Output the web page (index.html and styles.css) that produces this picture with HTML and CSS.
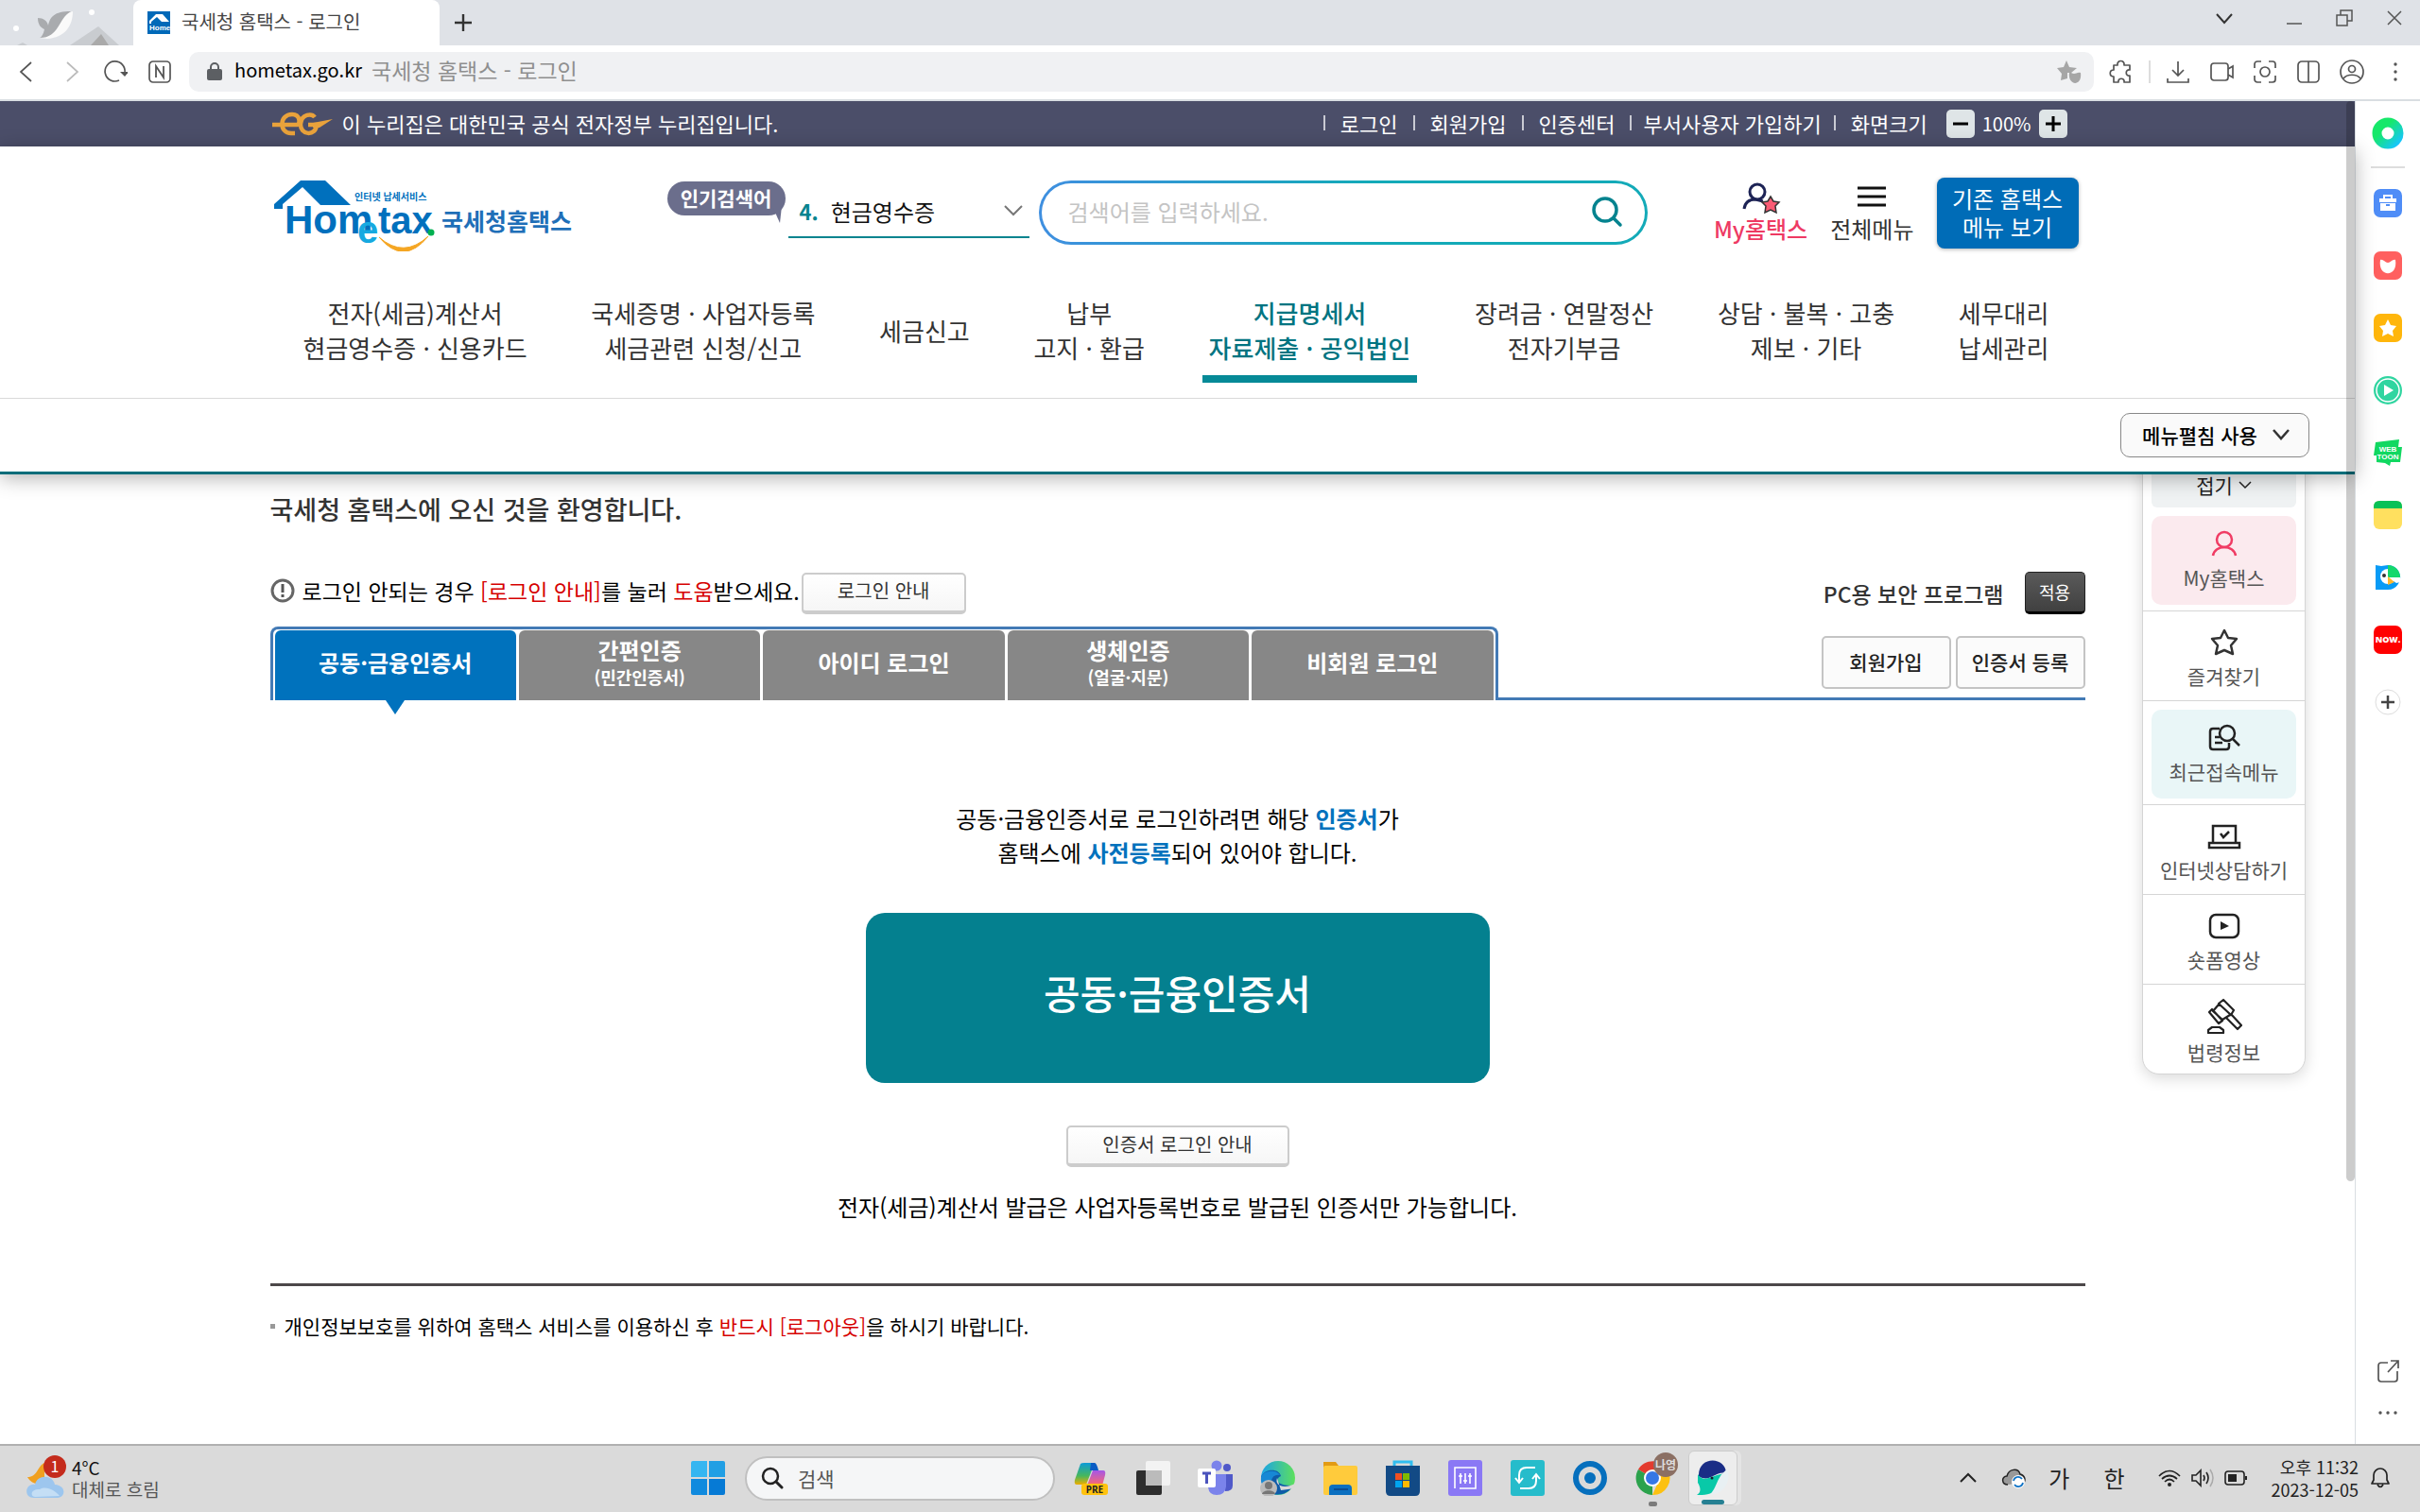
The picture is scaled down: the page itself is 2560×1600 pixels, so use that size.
FILE: index.html
```html
<!DOCTYPE html>
<html lang="ko">
<head>
<meta charset="utf-8">
<meta name="viewport" content="width=device-width, initial-scale=1">
<title>국세청 홈택스 - 로그인</title>
<link rel="stylesheet" href="styles.css">
</head>
<body>
<div class="tabstrip">
  <svg class="whale-deco" viewBox="0 0 141 48" aria-hidden="true">
    <circle cx="17" cy="30" r="3" fill="#fff"/><circle cx="97" cy="13" r="3" fill="#fff"/>
    <path d="M74 48L104 28L126 48Z" fill="#c9ccd0"/><path d="M96 48L107 36L115 48Z" fill="#aaa"/>
    <path d="M18 48l6-3 5 3z" fill="#c9ccd0"/>
    <path d="M77 12C77 28 68 40 50 41L42 40C56 34 54 18 77 12Z" fill="#fafafa"/>
    <path d="M75 12C57 12 53 18 51 27C50 22 46 19 40 19C40 26 43 29 47 31C46 36 44 39 42 40C63 40 61 20 75 12Z" fill="#a9abae"/>
  </svg>
  <div class="tab">
    <svg width="24" height="24" viewBox="0 0 24 24" aria-hidden="true"><rect width="24" height="24" fill="#0069b8"/><path d="M2 13V10L9 3H16L23 11H15L10 6L4 11V13Z" fill="#fff"/><text x="2" y="20" class="favicon-text">Home</text></svg>
    <span>국세청 홈택스 - 로그인</span>
  </div>
  <button class="icon-btn new-tab" aria-label="새 탭"><svg width="20" height="20" viewBox="0 0 20 20"><path d="M10 1V19M1 10H19" stroke="#333" stroke-width="2.4"/></svg></button>
  <div class="window-controls">
    <button class="icon-btn" aria-label="탭 검색"><svg width="18" height="18" viewBox="0 0 18 18"><path d="M1 5L9 14L17 5" fill="none" stroke="#333" stroke-width="2"/></svg></button>
    <button class="icon-btn" aria-label="최소화"><svg width="18" height="18" viewBox="0 0 18 18"><path d="M1 15H17" stroke="#555" stroke-width="1.5"/></svg></button>
    <button class="icon-btn" aria-label="창 크기"><svg width="18" height="18" viewBox="0 0 18 18"><path d="M1 6H12V17H1ZM5 6V1H17V12H12" fill="none" stroke="#555" stroke-width="1.5"/></svg></button>
    <button class="icon-btn" aria-label="닫기"><svg width="18" height="18" viewBox="0 0 18 18"><path d="M2 2L16 16M16 2L2 16" stroke="#555" stroke-width="1.5"/></svg></button>
  </div>
</div>

<div class="toolbar">
  <div class="nav-icons">
    <button class="icon-btn" aria-label="뒤로"><svg width="26" height="26" viewBox="0 0 26 26"><path d="M18 3L7 13L18 23" fill="none" stroke="#555" stroke-width="1.7"/></svg></button>
    <button class="icon-btn" aria-label="앞으로"><svg width="26" height="26" viewBox="0 0 26 26"><path d="M9 3L20 13L9 23" fill="none" stroke="#bbb" stroke-width="1.7"/></svg></button>
    <button class="icon-btn" aria-label="새로고침"><svg width="26" height="26" viewBox="0 0 26 26"><path d="M17 22A10.500 10.500 0 1 1 23 14" fill="none" stroke="#555" stroke-width="1.7"/><path d="M18 13H27L23 18Z" fill="#555"/></svg></button>
    <button class="icon-btn" aria-label="네이버"><svg width="26" height="26" viewBox="0 0 26 26"><rect x="2" y="2" width="22" height="22" rx="4" fill="none" stroke="#555" stroke-width="1.700"/><path d="M9 19V7L17 19V7" fill="none" stroke="#555" stroke-width="1.800"/></svg></button>
  </div>
  <div class="address">
    <svg width="16" height="20" viewBox="0 0 16 20" aria-hidden="true"><rect y="7" width="16" height="12" rx="2" fill="#5c5f63"/><path d="M4 8V5A4 4 0 0 1 12 5V8" fill="none" stroke="#5c5f63" stroke-width="2"/></svg>
    <span class="host">hometax.go.kr</span><span class="page-name">국세청 홈택스 - 로그인</span>
    <svg class="address-star" width="26" height="24" viewBox="0 0 26 24" aria-hidden="true"><path d="M10 0L13 7L21 8L15 13L11 13L11 19L4 21L5 14L0 8L7 7Z" fill="#a6a6a6"/><path d="M13 13C15 12 16 14 18 14C20 14 22 12 25 13C27 28 11 27 13 13Z" fill="#a6a6a6"/></svg>
  </div>
  <div class="tool-icons">
    <button class="icon-btn" aria-label="확장"><svg width="26" height="26" viewBox="0 0 26 26"><path d="M5 6H9C8 0 17 0 16 6H22V11C17 10 17 18 22 17V24H16C17 19 9 19 10 24H5V18C0 18 0 11 5 11Z" fill="none" stroke="#555" stroke-width="1.700" stroke-linejoin="round"/></svg></button>
    <span class="tool-divider"></span>
    <button class="icon-btn" aria-label="다운로드"><svg width="26" height="26" viewBox="0 0 26 26"><path d="M13 2V17M7 11L13 17L19 11M2 20V24H24V20" fill="none" stroke="#555" stroke-width="1.700"/></svg></button>
    <button class="icon-btn" aria-label="녹화"><svg width="26" height="26" viewBox="0 0 26 26"><rect x="2" y="4" width="18" height="18" rx="3" fill="none" stroke="#555" stroke-width="1.700"/><path d="M20 10L25 7V19L20 16" fill="none" stroke="#555" stroke-width="1.700"/></svg></button>
    <button class="icon-btn" aria-label="캡처"><svg width="26" height="26" viewBox="0 0 26 26"><path d="M2 9V5A3 3 0 0 1 5 2H9M17 2H21A3 3 0 0 1 24 5V9M24 17V21A3 3 0 0 1 21 24H17M9 24H5A3 3 0 0 1 2 21V17" fill="none" stroke="#555" stroke-width="1.700"/><circle cx="13" cy="13" r="5" fill="none" stroke="#555" stroke-width="1.700"/></svg></button>
    <button class="icon-btn" aria-label="분할"><svg width="26" height="26" viewBox="0 0 26 26"><rect x="2" y="2" width="22" height="22" rx="4" fill="none" stroke="#555" stroke-width="1.700"/><path d="M13 2V24" stroke="#555" stroke-width="1.700"/></svg></button>
    <button class="icon-btn" aria-label="프로필"><svg width="26" height="26" viewBox="0 0 26 26"><circle cx="13" cy="13" r="12" fill="none" stroke="#555" stroke-width="1.700"/><circle cx="13" cy="10" r="3.500" fill="none" stroke="#555" stroke-width="1.700"/><path d="M4 20C8 15 18 15 22 20" fill="none" stroke="#555" stroke-width="1.700"/></svg></button>
    <button class="icon-btn" aria-label="메뉴"><svg width="26" height="26" viewBox="0 0 26 26"><g fill="#555"><circle cx="13" cy="5" r="1.700"/><circle cx="13" cy="13" r="1.700"/><circle cx="13" cy="21" r="1.700"/></g></svg></button>
  </div>
</div>

<div class="viewport">
  <div class="page">
    <div class="gov-bar"><div class="container gov-inner">
      <svg width="68" height="26" viewBox="0 0 68 26" aria-hidden="true"><g fill="none" stroke="#e9a23b" stroke-width="4.500"><path d="M2 14H28C32 14 32 3 23 3C9 3 9 23 22 23H26"/><path d="M47 6C44 2 33 2 32 13C31 25 48 27 49 14H40"/></g><path d="M45 12L66 8L52 17H45Z" fill="#e9a23b"/></svg>
      <span>이 누리집은 대한민국 공식 전자정부 누리집입니다.</span>
      <ul class="util">
        <li><a href="#">로그인</a></li><li><a href="#">회원가입</a></li><li><a href="#">인증센터</a></li><li class="tight"><a href="#">부서사용자 가입하기</a></li><li class="tight-after">화면크기</li>
      </ul>
      <div class="zoomer">
        <button aria-label="축소"><svg width="16" height="16" viewBox="0 0 16 16"><path d="M0 8H16" stroke="#000" stroke-width="3"/></svg></button>
        <output>100%</output>
        <button aria-label="확대"><svg width="16" height="16" viewBox="0 0 16 16"><path d="M0 8H16M8 0V16" stroke="#000" stroke-width="3"/></svg></button>
      </div>
    </div></div>

    <header class="site-head">
      <div class="container head-row">
        <a href="#" class="logo" aria-label="국세청홈택스">
          <svg width="320" height="76" viewBox="0 0 320 76">
            <path d="M4 31V26L32 1H58L85 27H53L34 8L13 26V31Z" fill="#0070bd"/>
            <text x="15" y="57" class="logo-main">Hom</text>
            <text x="92" y="67" class="logo-e">e</text>
            <text x="114" y="57" class="logo-tax">tax</text>
            <circle cx="170" cy="56" r="3.500" fill="#00b050"/>
            <path d="M115 61Q141 84 167 60Q141 92 115 61Z" fill="#f5a623" stroke="#f5a623"/>
            <text x="89" y="22" class="logo-sub">인터넷 납세서비스</text>
            <text x="181" y="54" class="logo-name">국세청홈택스</text>
          </svg>
        </a>
        <div class="hot">
          <span class="hot-badge">인기검색어</span>
          <div class="hot-pick"><b>4.</b><select aria-label="인기검색어"><option>현금영수증</option></select>
            <svg width="20" height="12" viewBox="0 0 20 12" aria-hidden="true"><path d="M1 1L10 10L19 1" fill="none" stroke="#777" stroke-width="2"/></svg></div>
        </div>
        <form class="search"><input type="search" placeholder="검색어를 입력하세요." aria-label="검색어">
          <button type="button" aria-label="검색"><svg width="34" height="34" viewBox="0 0 34 34"><circle cx="15" cy="15" r="12" fill="none" stroke="#05838f" stroke-width="3.500"/><path d="M24 24L31 31" stroke="#05838f" stroke-width="3.500" stroke-linecap="round"/></svg></button></form>
        <a href="#" class="quick my"><svg width="42" height="34" viewBox="0 0 42 34" aria-hidden="true"><circle cx="17" cy="10" r="8" fill="none" stroke="#1d2355" stroke-width="3"/><path d="M3 28C4 21 9 18 15 18L23 20" fill="none" stroke="#1d2355" stroke-width="3"/><path d="M31 15L34 20L40 21L36 25L37 32L31 29L25 32L26 25L22 21L28 20Z" fill="#fa5b74" stroke="#333" stroke-width="1.500"/></svg>My홈택스</a>
        <a href="#" class="quick all"><svg width="30" height="34" viewBox="0 0 30 34" aria-hidden="true"><path d="M0 6H30M0 15H30M0 24H30" stroke="#111" stroke-width="3"/></svg>전체메뉴</a>
        <button class="classic">기존 홈택스<br>메뉴 보기</button>
      </div>
      <nav class="container gnb">
        <a href="#">전자(세금)계산서<br>현금영수증 · 신용카드</a>
        <a href="#">국세증명 · 사업자등록<br>세금관련 신청/신고</a>
        <a href="#">세금신고</a>
        <a href="#">납부<br>고지 · 환급</a>
        <a href="#" class="on">지급명세서<br>자료제출 · 공익법인</a>
        <a href="#">장려금 · 연말정산<br>전자기부금</a>
        <a href="#">상담 · 불복 · 고충<br>제보 · 기타</a>
        <a href="#">세무대리<br>납세관리</a>
      </nav>
      <div class="submenu"><button class="unfold">메뉴펼침 사용<svg width="18" height="12" viewBox="0 0 18 12" aria-hidden="true"><path d="M1 1L9 10L17 1" fill="none" stroke="#333" stroke-width="2.500"/></svg></button></div>
    </header>

    <main class="login">
      <div class="container">
        <h1>국세청 홈택스에 오신 것을 환영합니다.</h1>
        <div class="notice">
          <div class="notice-text">
            <svg width="26" height="26" viewBox="0 0 26 26" aria-hidden="true"><circle cx="13" cy="13" r="11" fill="none" stroke="#666" stroke-width="3"/><path d="M13 6V15M13 17V20" stroke="#555" stroke-width="3"/></svg>
            <p>로그인 안되는 경우 <em>[로그인 안내]</em>를 눌러 <em>도움</em>받으세요.</p>
          </div>
          <button class="soft">로그인 안내</button>
          <strong class="sec">PC용 보안 프로그램</strong>
          <button class="apply">적용</button>
        </div>
        <div class="tabs">
          <div class="tab-set">
            <button class="on">공동·금융인증서</button>
            <button>간편인증<small>(민간인증서)</small></button>
            <button>아이디 로그인</button>
            <button>생체인증<small>(얼굴·지문)</small></button>
            <button>비회원 로그인</button>
          </div>
          <div class="tab-side"><button class="plain">회원가입</button><button class="plain">인증서 등록</button></div>
        </div>
        <section class="cert">
          <p>공동·금융인증서로 로그인하려면 해당 <b>인증서</b>가<br>홈택스에 <b>사전등록</b>되어 있어야 합니다.</p>
          <button class="big">공동·금융인증서</button>
          <button class="soft wide">인증서 로그인 안내</button>
          <p>전자(세금)계산서 발급은 사업자등록번호로 발급된 인증서만 가능합니다.</p>
        </section>
        <ul class="foot-note"><li>개인정보보호를 위하여 홈택스 서비스를 이용하신 후 <em>반드시 [로그아웃]</em>을 하시기 바랍니다.</li></ul>
      </div>
      <aside class="float">
        <a href="#" class="fold"><span>접기 <svg width="14" height="9" viewBox="0 0 14 9" aria-hidden="true"><path d="M1 1L7 7L13 1" fill="none" stroke="#222" stroke-width="1.500"/></svg></span></a>
        <div class="cell"><a href="#" class="pink"><svg width="30" height="32" viewBox="0 0 30 32"><circle cx="15" cy="11" r="8" fill="none" stroke="#f03c64" stroke-width="2.500"/><path d="M3 28C5 16 25 16 27 28" fill="none" stroke="#f03c64" stroke-width="2.500"/></svg>My홈택스</a></div>
        <div class="cell"><a href="#"><svg width="32" height="32" viewBox="0 0 32 32"><path d="M16 3L20 11L29 12L23 19L25 28L16 24L7 28L9 19L3 12L12 11Z" fill="none" stroke="#333" stroke-width="2.500" stroke-linejoin="round"/></svg>즐겨찾기</a></div>
        <div class="cell"><a href="#" class="mint"><svg width="34" height="32" viewBox="0 0 34 32"><path d="M12 6H5Q2 6 2 9V25Q2 28 5 28H19Q22 28 22 25V21M7 15H12M7 21H15" fill="none" stroke="#222" stroke-width="2.500"/><circle cx="20" cy="11" r="8" fill="none" stroke="#222" stroke-width="2.500"/><path d="M26 17L33 24" stroke="#222" stroke-width="2.500"/></svg>최근접속메뉴</a></div>
        <div class="cell"><a href="#"><svg width="36" height="32" viewBox="0 0 36 32"><path d="M6 22V5H30V22M2 23H34V28H2ZM14 13L17 17L23 11" fill="none" stroke="#222" stroke-width="2.500"/></svg>인터넷상담하기</a></div>
        <div class="cell"><a href="#"><svg width="34" height="32" viewBox="0 0 34 32"><rect x="2" y="4" width="30" height="24" rx="6" fill="none" stroke="#222" stroke-width="2.500"/><path d="M13 11V20L22 16Z" fill="#222"/></svg>숏폼영상</a></div>
        <div class="cell"><a href="#"><svg width="38" height="38" viewBox="0 0 38 38"><path d="M13 6L18 2L29 13L26 18ZM3 15L6 12L17 24L13 27ZM13 7L7 14L17 23L25 18M26 17L37 29L33 33L21 21M2 37V34L6 31H14L18 34V37Z" fill="none" stroke="#222" stroke-width="2.200" stroke-linejoin="round"/></svg>법령정보</a></div>
      </aside>
    </main>
    <div class="scrollbar"></div>
  </div>

  <aside class="sidebar">
    <a href="#" aria-label="웨일"><svg width="34" height="34" viewBox="0 0 34 34"><defs><linearGradient id="rg" x1="0" y1="0" x2="1" y2="1"><stop offset=".3" stop-color="#17e86a"/><stop offset="1" stop-color="#16c5ff"/></linearGradient></defs><circle cx="17" cy="17" r="11.500" fill="none" stroke="url(#rg)" stroke-width="10"/></svg></a>
    <hr>
    <a href="#" aria-label="도구"><svg width="30" height="30" viewBox="0 0 30 30"><rect width="30" height="30" rx="7" fill="#4f8df7"/><path d="M11 10V7H19V10" fill="none" stroke="#fff" stroke-width="2"/><path d="M6 10H24V14H6ZM7 15H23V23H7Z" fill="#fff"/><rect x="13" y="16" width="4" height="2" fill="#4f8df7"/></svg></a>
    <a href="#" aria-label="스크랩"><svg width="30" height="30" viewBox="0 0 30 30"><rect width="30" height="30" rx="7" fill="#ff605f"/><path d="M7 9C10 8 12 12 15 12C18 12 20 8 23 9C26 28 4 28 7 9Z" fill="#fff"/></svg></a>
    <a href="#" aria-label="즐겨찾기"><svg width="30" height="30" viewBox="0 0 30 30"><rect width="30" height="30" rx="7" fill="#ffb60b"/><path d="M15 6L18 12L24 13L20 18L21 24L15 21L9 24L10 18L6 13L12 12Z" fill="#fff"/></svg></a>
    <a href="#" aria-label="재생"><svg width="30" height="30" viewBox="0 0 30 30"><circle cx="15" cy="15" r="15" fill="#30d5a0"/><circle cx="15" cy="15" r="12" fill="none" stroke="#fff" stroke-width="1.500"/><path d="M11 9V21L21 15Z" fill="#fff"/></svg></a>
    <a href="#" aria-label="웹툰"><svg width="30" height="30" viewBox="0 0 30 30"><path d="M2 4L27 1L26 9H30L28 25H18L17 29L12 26L3 25V18H0Z" fill="#11d861"/><text x="15" y="14" text-anchor="middle" class="toon">WEB</text><text x="15" y="22" text-anchor="middle" class="toon">TOON</text></svg></a>
    <a href="#" aria-label="메모"><svg width="30" height="30" viewBox="0 0 30 30"><rect width="30" height="30" rx="6" fill="#ffe05f"/><path d="M0 8V6Q0 0 6 0H24Q30 0 30 6V8Z" fill="#08c157"/></svg></a>
    <a href="#" aria-label="파파고"><svg width="30" height="30" viewBox="0 0 30 30"><path d="M2 2L8 3L15 2A13 13 0 0 1 26 22Q22 28 15 28H2Z" fill="#089bf6"/><circle cx="15" cy="14" r="8" fill="#fff"/><path d="M15 2A13 13 0 0 1 28 15H15Z" fill="#15d86b"/><path d="M15 15L28 15V20L24 21Z" fill="#fff"/><path d="M15 14L22 20L15 23Z" fill="#ffb72b"/><circle cx="11" cy="13" r="2" fill="#333"/></svg></a>
    <a href="#" aria-label="나우"><svg width="30" height="30" viewBox="0 0 30 30"><rect width="30" height="30" rx="7" fill="#f00"/><text x="15" y="18" text-anchor="middle" class="now">NOW.</text></svg></a>
    <a href="#" aria-label="추가"><svg width="30" height="30" viewBox="0 0 30 30"><circle cx="15" cy="15" r="13" fill="#fff" stroke="#ddd"/><path d="M15 8V22M8 15H22" stroke="#444" stroke-width="2.500"/></svg></a>
    <a href="#" class="push" aria-label="새 창"><svg width="26" height="26" viewBox="0 0 26 26"><path d="M13 4H6Q3 4 3 7V21Q3 24 6 24H20Q23 24 23 21V13M16 2H24V10M24 2L13 14" fill="none" stroke="#555" stroke-width="1.700"/></svg></a>
    <a href="#" class="more" aria-label="더보기"><svg width="26" height="26" viewBox="0 0 26 26"><g fill="#555"><circle cx="5" cy="13" r="1.700"/><circle cx="13" cy="13" r="1.700"/><circle cx="21" cy="13" r="1.700"/></g></svg></a>
  </aside>
</div>

<footer class="taskbar">
  <div class="weather">
    <svg width="44" height="48" viewBox="0 0 44 48" aria-hidden="true"><path d="M20 8C12 12 13 23 2 23C5 29 14 33 20 29Z" fill="#f0a020"/><path d="M9 45C-3 45 0 29 10 31C12 20 29 20 31 31C44 32 42 45 34 45Z" fill="#9dc6ee"/><path d="M10 44C4 43 6 35 15 36C22 32 31 37 36 43Z" fill="#c4def5"/><circle cx="31" cy="12" r="12" fill="#c42b1c"/><text x="31" y="18" text-anchor="middle" class="badge-num">1</text></svg>
    <p>4°C<br><span>대체로 흐림</span></p>
  </div>
  <div class="dock">
    <button class="icon-btn start" aria-label="시작"><svg width="36" height="36" viewBox="0 0 36 36"><path d="M0 2Q0 0 2 0H17V17H0Z" fill="#35b6f1"/><path d="M19 0H34Q36 0 36 2V17H19Z" fill="#219fe4"/><path d="M0 19H17V36H2Q0 36 0 34Z" fill="#108ade"/><path d="M19 19H36V34Q36 36 34 36H19Z" fill="#067ad5"/></svg></button>
    <label class="task-search"><svg width="24" height="24" viewBox="0 0 24 24" aria-hidden="true"><circle cx="10" cy="10" r="8" fill="none" stroke="#222" stroke-width="2.500"/><path d="M16 16L22 22" stroke="#222" stroke-width="3" stroke-linecap="round"/></svg><input type="text" placeholder="검색" aria-label="검색"></label>
    <button class="app" aria-label="코파일럿"><svg width="36" height="36" viewBox="0 0 36 36"><defs><linearGradient id="cp" x1="0" y1="0" x2="0" y2="1"><stop stop-color="#0c9bd8"/><stop offset=".6" stop-color="#47b75c"/><stop offset="1" stop-color="#f0ad00"/></linearGradient><linearGradient id="cq" x1="0" y1="0" x2="0" y2="1"><stop stop-color="#a456e8"/><stop offset="1" stop-color="#ff6a6a"/></linearGradient></defs><path d="M7 3Q8 2 11 2H22L13 25H3Q0 25 1 20Z" fill="url(#cp)"/><path d="M18 2H22Q24 2 26 10H17Z" fill="#0a5cc4"/><path d="M20 10H31Q34 10 33 15L30 26H14Z" fill="url(#cq)"/><rect x="8" y="24" width="28" height="12" rx="3" fill="#ffc20e"/><text x="22" y="34" text-anchor="middle" class="pre">PRE</text></svg></button>
    <button class="app" aria-label="작업 보기"><svg width="36" height="36" viewBox="0 0 36 36"><rect x="0" y="10" width="27" height="26" rx="2" fill="#2d2d2d"/><rect x="10" width="26" height="26" rx="2" fill="#f3f3f3"/><path d="M10 10H27V26H10Z" fill="#bbb"/></svg></button>
    <button class="app" aria-label="팀즈"><svg width="38" height="38" viewBox="0 0 38 38"><circle cx="20" cy="6" r="5.500" fill="#7b83eb"/><circle cx="31" cy="8" r="4" fill="#5059c9"/><path d="M26 15H37V27Q37 33 29 33Z" fill="#5059c9"/><path d="M11 15H30V28Q29 37 20 37Q12 37 11 29Z" fill="#7b83eb"/><rect y="9" width="19" height="20" rx="2" fill="#fff"/><path d="M5 14H14M9.500 14V25" stroke="#4b53bc" stroke-width="3"/></svg></button>
    <button class="app" aria-label="엣지"><svg width="38" height="38" viewBox="0 0 38 38"><defs><linearGradient id="eg"><stop stop-color="#1ba2e8"/><stop offset="1" stop-color="#5de05c"/></linearGradient></defs><circle cx="19" cy="19" r="18" fill="url(#eg)"/><path d="M1 18C4 9 20 8 22 17C16 19 16 28 35 27C29 39 10 40 3 28Z" fill="#0e5ba8"/><path d="M1 18C4 10 18 10 21 16C12 14 9 24 14 35C5 32 0 26 1 18Z" fill="#1788d5"/><path d="M18 19C15 27 25 31 37 25V30L22 32Z" fill="#d9d9d9"/><circle cx="9" cy="30" r="9" fill="#bbb"/><circle cx="9" cy="27" r="4" fill="#777"/><path d="M2 36C3 31 15 31 16 36Z" fill="#777"/></svg></button>
    <button class="app" aria-label="탐색기"><svg width="38" height="38" viewBox="0 0 38 38"><path d="M1 2H14L17 6V10H1Z" fill="#e29b14"/><rect x="1" y="6" width="36" height="31" rx="2" fill="#ffcb3c"/><path d="M7 37V30Q7 26 11 26H27Q31 26 31 30V37Z" fill="#0b6fc0"/><path d="M12 31H27" stroke="#0a4d93" stroke-width="2"/></svg></button>
    <button class="app" aria-label="스토어"><svg width="36" height="38" viewBox="0 0 36 38"><path d="M9 6V2H27V6" fill="none" stroke="#30bdf0" stroke-width="3"/><path d="M0 6H36V33Q36 38 31 38H5Q0 38 0 33Z" fill="#124a85"/><path d="M10 14H17V21H10Z" fill="#f25022"/><path d="M18 14H25V21H18Z" fill="#7fba00"/><path d="M10 22H17V29H10Z" fill="#00a4ef"/><path d="M18 22H25V29H18Z" fill="#ffb900"/></svg></button>
    <button class="app" aria-label="설정 앱"><svg width="36" height="38" viewBox="0 0 36 38"><rect width="36" height="38" rx="3" fill="#8a78f5"/><path d="M7 30V8H29V30H12M13 14V25M18 14V25M23 14V25M11 17H15M16 22H20M21 17H25" fill="none" stroke="#fff" stroke-width="1.600"/></svg></button>
    <button class="app" aria-label="동기화 앱"><svg width="36" height="38" viewBox="0 0 36 38"><rect width="36" height="38" rx="3" fill="#26bccb"/><path d="M26 8H17Q9 8 9 16V23M5 19L9 24L13 19M10 30H19Q27 30 27 22V15M23 20L27 15L31 20" fill="none" stroke="#fff" stroke-width="2"/></svg></button>
    <button class="app" aria-label="원형 앱"><svg width="38" height="38" viewBox="0 0 38 38"><circle cx="19" cy="19" r="15" fill="#dadada" stroke="#066fbd" stroke-width="6"/><circle cx="19" cy="19" r="6" fill="#066fbd"/></svg></button>
    <button class="app" aria-label="크롬"><svg width="56" height="60" viewBox="-8 0 56 60"><path d="M20 30L5 21A18 18 0 0 1 36 21Z" fill="#e33b2e"/><path d="M5 21L20 30L20 48A18 18 0 0 1 5 21Z" fill="#2ba24c"/><path d="M36 21A18 18 0 0 1 20 48L28 30L20 21Z" fill="#fcc111"/><circle cx="20" cy="30" r="9" fill="#fff"/><circle cx="20" cy="30" r="7" fill="#3577e5"/><circle cx="34" cy="16" r="13" fill="#8b6f63"/><text x="34" y="21" text-anchor="middle" class="na">나영</text><rect x="16" y="55" width="9" height="5" rx="2" fill="#7b7b7b"/></svg></button>
    <button class="app current" aria-label="웨일 브라우저"><svg width="36" height="38" viewBox="0 0 36 38"><path d="M3 17C2 -5 32 -4 32 14C20 11 15 25 3 17Z" fill="#1a2d86"/><path d="M2 15C8 26 20 14 33 14C34 29 18 38 1 37C6 34 5 29 2 24Z" fill="#08c9a8"/><path d="M33 10C37 19 33 36 14 37C23 30 21 18 33 10Z" fill="#e8f0f3"/><circle cx="17" cy="19" r="1.500" fill="#123"/></svg></button>
  </div>
  <div class="tray">
    <svg width="20" height="14" viewBox="0 0 20 14" aria-hidden="true"><path d="M2 11L10 3L18 11" fill="none" stroke="#222" stroke-width="2"/></svg>
    <svg class="cloud" width="26" height="22" viewBox="0 0 26 22" aria-hidden="true"><path d="M7 18C0 18 0 9 6 9C8 1 18 0 20 7C25 8 26 13 24 16" fill="#999" stroke="#222" stroke-width="1.500"/><circle cx="18" cy="15" r="7" fill="#fff"/><path d="M13 14A5 5 0 0 1 22 12M23 16A5 5 0 0 1 14 18" fill="none" stroke="#0b70c4" stroke-width="1.700"/></svg>
    <span class="ime">가</span><span class="ime">한</span>
    <div class="status">
      <svg width="26" height="20" viewBox="0 0 26 20" aria-hidden="true"><path d="M2 8Q13 -3 24 8M5 11Q13 4 21 11M8 14Q13 9 18 14" fill="none" stroke="#222" stroke-width="1.700"/><circle cx="13" cy="17" r="2" fill="#222"/></svg>
      <svg width="26" height="20" viewBox="0 0 26 20" aria-hidden="true"><path d="M2 7H6L11 2V18L6 13H2ZM14 7Q16 10 14 13M17 4Q21 10 17 16" fill="none" stroke="#222" stroke-width="1.600"/><path d="M21 1Q27 10 21 19" fill="none" stroke="#aaa" stroke-width="1.500"/></svg>
      <svg width="26" height="20" viewBox="0 0 26 20" aria-hidden="true"><rect x="2" y="3" width="20" height="14" rx="3" fill="none" stroke="#222" stroke-width="1.600"/><rect x="5" y="6" width="9" height="8" fill="#222"/><path d="M23 8H25V12H23Z" fill="#222"/></svg>
    </div>
    <p class="clock">오후 11:32<br>2023-12-05</p>
    <svg width="22" height="24" viewBox="0 0 22 24" aria-hidden="true"><path d="M2 18L4 14V9A7 7 0 0 1 18 9V14L20 18ZM8 19Q11 24 14 19" fill="none" stroke="#222" stroke-width="1.700" stroke-linejoin="round"/></svg>
  </div>
</footer>
</body>
</html>
```

FILE: styles.css
```css
* { box-sizing: border-box; }
body {
  margin: 0;
  min-height: 100vh;
  display: flex;
  flex-direction: column;
  background: #fff;
  color: #000;
  font-family: "Noto Sans CJK KR", "Noto Sans", sans-serif;
  font-size: 22px;
}
p, ul, h1 { margin: 0; padding: 0; }
ul { list-style: none; }
a { color: inherit; text-decoration: none; }
em { font-style: normal; color: #d60000; }
button, input, select { font-family: inherit; }
svg { display: block; flex: none; }
.container { width: 100%; max-width: 1920px; margin: 0 auto; }
.icon-btn { display: grid; place-items: center; padding: 0; border: 0; background: none; }

/* browser chrome */
.tabstrip { display: flex; align-items: center; height: 48px; background: #dfe2e7; }
.whale-deco { width: 141px; height: 48px; }
.tab { display: flex; align-items: center; gap: 12px; width: 324px; height: 48px; padding-left: 15px; border-radius: 8px 8px 0 0; background: #fff; color: #444; font-size: 20px; }
.tab span { padding-bottom: 3px; }
.favicon-text { font: bold 8px "Liberation Sans", sans-serif; fill: #fff; }
.new-tab { margin-left: 15px; }
.window-controls { display: flex; align-items: center; gap: 35px; margin-left: auto; padding: 0 18px 10px 0; }
.window-controls .icon-btn:first-child { margin-right: 21px; }
.toolbar { display: flex; align-items: center; height: 59px; border-bottom: 2px solid #d9dee2; padding: 0 13px 2px 15px; }
.nav-icons { display: flex; gap: 21px; }
.address { display: flex; align-items: center; flex: 1; gap: 10px; height: 42px; margin: 0 16px 0 18px; padding: 0 13px 0 19px; border-radius: 10px; background: #f0f1f3; line-height: 36px; }
.address span { padding-bottom: 3px; }
.host { margin-left: 3px; font-size: 20px; }
.page-name { font-size: 23px; color: #8f8f8f; }
.address-star { margin-left: auto; }
.tool-icons { display: flex; align-items: center; gap: 20px; }
.tool-divider { width: 2px; height: 24px; margin: 0 -4px; background: #ddd; }

.viewport { display: flex; flex: 1; }
.page { position: relative; flex: 1; min-width: 0; display: flex; flex-direction: column; border-right: 1px solid #d9dee2; }
.scrollbar { position: absolute; z-index: 5; top: 0; right: 0; width: 9px; height: 1143px; border-radius: 5px; background: rgba(0, 0, 0, .2); }

/* government bar */
.gov-bar { background: #4b4e69; color: #fff; }
.gov-inner { display: flex; align-items: center; height: 48px; padding-right: 19px; line-height: 44px; }
.gov-inner > span, .util { padding-bottom: 3px; }
.gov-inner > svg { margin-right: 8px; }
.util { display: flex; margin-left: auto; }
.util li { display: flex; align-items: center; }
.util li::before { content: ""; width: 2px; height: 16px; margin: 0 16px; background: #c9cad3; }
.util .tight::before { margin-right: 12px; }
.util .tight-after::before { margin-left: 13px; }
.zoomer { display: flex; align-items: center; gap: 8px; margin-left: 20px; font-size: 20px; }
.zoomer button { display: grid; place-items: center; width: 30px; height: 30px; padding: 0; border: 0; border-radius: 5px; background: #dfe5e7; }

/* site header */
.site-head { position: relative; z-index: 2; background: #fff; border-bottom: 3px solid #006d7a; box-shadow: 0 4px 20px rgba(0, 0, 0, .3); }
.head-row { display: flex; align-items: flex-start; padding: 33px 7px 0 0; }
.logo { margin-top: 2px; }
.logo-main { font: bold 42px "Liberation Sans Narrow", "Liberation Sans", sans-serif; fill: #0070bd; }
.logo-tax { font: bold 40px "Liberation Sans Narrow", "Liberation Sans", sans-serif; fill: #0070bd; }
.logo-e { font: bold 40px "Liberation Sans Narrow", "Liberation Sans", sans-serif; fill: #16a9e0; }
.logo-sub { font-size: 10px; font-weight: bold; fill: #0070bd; }
.logo-name { font-size: 25px; font-weight: bold; fill: #1f6fb8; }
.hot { display: flex; margin: 4px 0 0 100px; }
.hot-badge { position: relative; width: 125px; height: 36px; border-radius: 18px; background: #6b6e8c; color: #fff; font-size: 21px; font-weight: bold; line-height: 34px; text-align: center; }
.hot-badge::after { content: ""; position: absolute; right: 4px; top: 26px; border: 8px solid transparent; border-top: 18px solid #6b6e8c; border-right-width: 2px; }
.hot-pick { display: flex; align-items: center; gap: 13px; width: 255px; height: 60px; margin-left: 3px; padding: 4px 7px 0 12px; border-bottom: 2px solid #06848f; font-size: 24px; }
.hot-pick b { color: #06848f; font-size: 22px; }
.hot-pick select { flex: 1; min-width: 0; padding: 0; border: 0; background: none; appearance: none; font-size: 24px; color: #111; }
.search { display: flex; align-items: center; flex: 1; height: 68px; margin: 3px 70px 0 10px; padding: 0 23px 3px 28px; border: 3px solid transparent; border-radius: 34px; background: linear-gradient(#fff, #fff) padding-box, linear-gradient(90deg, #3f8fe0, #13aab8 55%) border-box; }
.search input { flex: 1; min-width: 0; border: 0; padding: 0; outline: 0; background: none; font-size: 24px; }
.search input::placeholder { color: #c4c4c4; }
.search button { padding: 0; border: 0; background: none; }
.quick { display: flex; flex-direction: column; align-items: center; margin: 5px 24px 0 0; font-size: 24px; line-height: 30px; color: #333; }
.quick.my { color: #ee3a63; font-weight: 500; }
.classic { width: 150px; height: 75px; padding: 0 0 1px; border: 0; border-radius: 8px; background: #006cb7; color: #fff; font-size: 24px; line-height: 30px; box-shadow: 0 1px 4px rgba(0, 0, 0, .3); }
.gnb { display: flex; justify-content: space-between; align-items: flex-start; margin-top: 41px; padding: 0 31px 0 28px; height: 114px; text-align: center; font-size: 26px; line-height: 37px; color: #333; }
.gnb a { display: flex; flex-direction: column; justify-content: center; height: 98px; padding: 5px 7px 11px; border-bottom: 8px solid transparent; white-space: nowrap; }
.gnb .on { color: #007481; font-weight: 500; border-color: #068a97; }
.submenu { display: flex; justify-content: flex-end; padding: 15px 48px 15px; border-top: 1px solid #d9d9d9; }
.unfold { display: flex; align-items: center; justify-content: center; gap: 16px; width: 200px; height: 47px; padding: 0 0 2px 2px; border: 1px solid #888; border-radius: 10px; background: #fafafa; color: #000; font-size: 21px; font-weight: 500; }

/* login */
.login { position: relative; flex: 1; padding-top: 18px; }
h1 { font-size: 27px; line-height: 38px; font-weight: 500; color: #333; }
.notice { display: flex; align-items: center; height: 45px; margin-top: 47px; font-size: 23px; line-height: 40px; }
.notice-text { display: flex; align-items: center; gap: 8px; margin-right: 2px; padding-bottom: 6px; }
.soft { width: 174px; height: 44px; padding: 0 0 3px; border: 2px solid #ccc; border-bottom-width: 4px; border-radius: 5px; background: linear-gradient(#fff, #f6f6f6); color: #333; font-size: 20px; line-height: 24px; }
.sec { margin-left: auto; font-weight: 500; color: #333; }
.apply { width: 64px; height: 45px; margin-left: 22px; padding: 0 0 2px; border: 1px solid #222; border-bottom: 3px solid #000; border-radius: 5px; background: linear-gradient(#5a5a5a, #404040); color: #fff; font-size: 18px; }
.tabs { display: flex; margin-top: 13px; }
.tab-set { display: flex; flex: 0 1 1299px; gap: 3px; height: 78px; padding: 1px 2px 0; border: solid #437ab5; border-width: 3px 3px 0; border-radius: 8px 8px 0 0; }
.tab-set button { position: relative; flex: 1; padding: 0 0 6px; border: 0; border-radius: 6px 6px 0 0; background: #878787; color: #fff; font-size: 24px; font-weight: bold; line-height: 30px; }
.tab-set small { display: block; font-size: 18px; line-height: 26px; }
.tab-set .on { background: #0072bd; }
.tab-set .on::after { content: ""; position: absolute; top: 100%; left: 50%; margin-left: -10px; border: 10px solid transparent; border-top: 15px solid #0072bd; border-bottom: 0; }
.tab-side { display: flex; flex: 1; align-items: center; justify-content: flex-end; gap: 5px; border-bottom: 3px solid #437ab5; }
.plain { width: 137px; height: 56px; padding: 0 0 2px; border: 2px solid #c4c4c4; border-radius: 5px; background: #fbfbfb; color: #222; font-size: 21px; font-weight: 500; }
.cert { display: flex; flex-direction: column; align-items: center; margin-top: 107px; padding-bottom: 63px; border-bottom: 3px solid #4c4849; text-align: center; font-size: 24px; line-height: 36px; }
.cert b { color: #0072bd; }
.big { width: 660px; height: 180px; margin-top: 46px; padding: 0 0 14px; border: 0; border-radius: 20px; background: #04808f; color: #fff; font-size: 42px; font-weight: 500; }
.soft.wide { width: 236px; margin: 45px 0 24px; }
.foot-note { padding-top: 26px; font-size: 21px; line-height: 32px; }
.foot-note li { display: flex; align-items: center; white-space: pre; }
.foot-note li::before { content: ""; width: 5px; height: 5px; margin-right: 10px; background: #999; }

/* floating quick menu */
.float { position: absolute; top: -40px; right: 52px; width: 173px; border: 1px solid #d5d5d5; border-radius: 0 0 18px 18px; background: #fff; color: #555; font-size: 21px; box-shadow: 0 4px 16px rgba(0, 0, 0, .15); }
.fold { display: flex; align-items: flex-end; justify-content: center; height: 74px; margin: 0 9px; border-radius: 6px; background: #eff2f3; line-height: 48px; color: #222; }
.fold span { display: flex; align-items: center; gap: 6px; }
.cell { padding: 9px 9px 7px; }
.cell a { display: flex; flex-direction: column; align-items: center; justify-content: center; gap: 3px; height: 78px; padding-top: 4px; line-height: 32px; border-radius: 10px; white-space: nowrap; }
.cell + .cell { border-top: 1px solid #d5d5d5; }
.cell .pink, .cell .mint { height: 94px; margin-bottom: -1px; padding: 0; }
.pink { background: #fbeaee; }
.mint { background: #e9f6f7; }

/* browser side bar */
.sidebar { display: flex; flex-direction: column; align-items: center; gap: 36px; width: 68px; padding: 17px 0 20px; background: #fff; }
.sidebar hr { width: 36px; margin: -18px 0 -14px; border: 0; border-top: 2px solid #ddd; }
.sidebar .push { margin-top: auto; }
.sidebar .more { margin-top: -18px; }
.toon { font: 900 8px "Liberation Sans", sans-serif; fill: #fff; }
.now { font: 900 9px "Open Sans", sans-serif; fill: #fff; }

/* taskbar */
.taskbar { display: grid; grid-template-columns: 1fr auto 1fr; align-items: center; height: 72px; border-top: 2px solid #b0b0b0; padding-bottom: 2px; background: #dadada; }
.weather { display: flex; align-items: center; gap: 5px; padding-left: 27px; font-size: 19px; line-height: 23px; color: #111; }
.weather span { color: #555; }
.badge-num { font-size: 16px; fill: #fff; }
.dock { display: flex; align-items: center; }
.start { margin: 0 21px 0 16px; }
.task-search { display: flex; align-items: center; gap: 15px; width: 328px; height: 47px; margin-right: 5px; padding-left: 15px; border: 2px solid #c0c0c0; border-radius: 24px; background: #f5f6f7; }
.task-search input { flex: 1; min-width: 0; border: 0; padding: 0; background: none; font-size: 21px; }
.task-search input::placeholder { color: #555; }
.app { display: grid; place-items: center; width: 66px; height: 60px; padding: 0; border: 0; background: none; }
.app.current { position: relative; width: 52px; height: 58px; margin: 0 7px 0 5px; border: 1px solid #ccc; border-radius: 6px; background: #ededed; box-shadow: 4px 0 0 #e4e4e4; }
.app.current::after { content: ""; position: absolute; bottom: 0; left: 13px; width: 24px; height: 5px; border-radius: 3px; background: #268093; }
.pre { font: bold 10px "Noto Sans", sans-serif; fill: #222; }
.na { font-size: 12px; font-weight: bold; fill: #ddd; }
.tray { display: flex; align-items: center; justify-content: flex-end; padding-right: 31px; color: #222; }
.cloud { margin-left: 25px; }
.ime { margin-left: 36px; font-size: 24px; line-height: 30px; }
.cloud + .ime { margin-left: 24px; }
.status { display: flex; gap: 9px; margin: 0 25px 0 34px; }
.clock { margin-right: 12px; font-size: 18px; line-height: 24px; text-align: right; }
```
